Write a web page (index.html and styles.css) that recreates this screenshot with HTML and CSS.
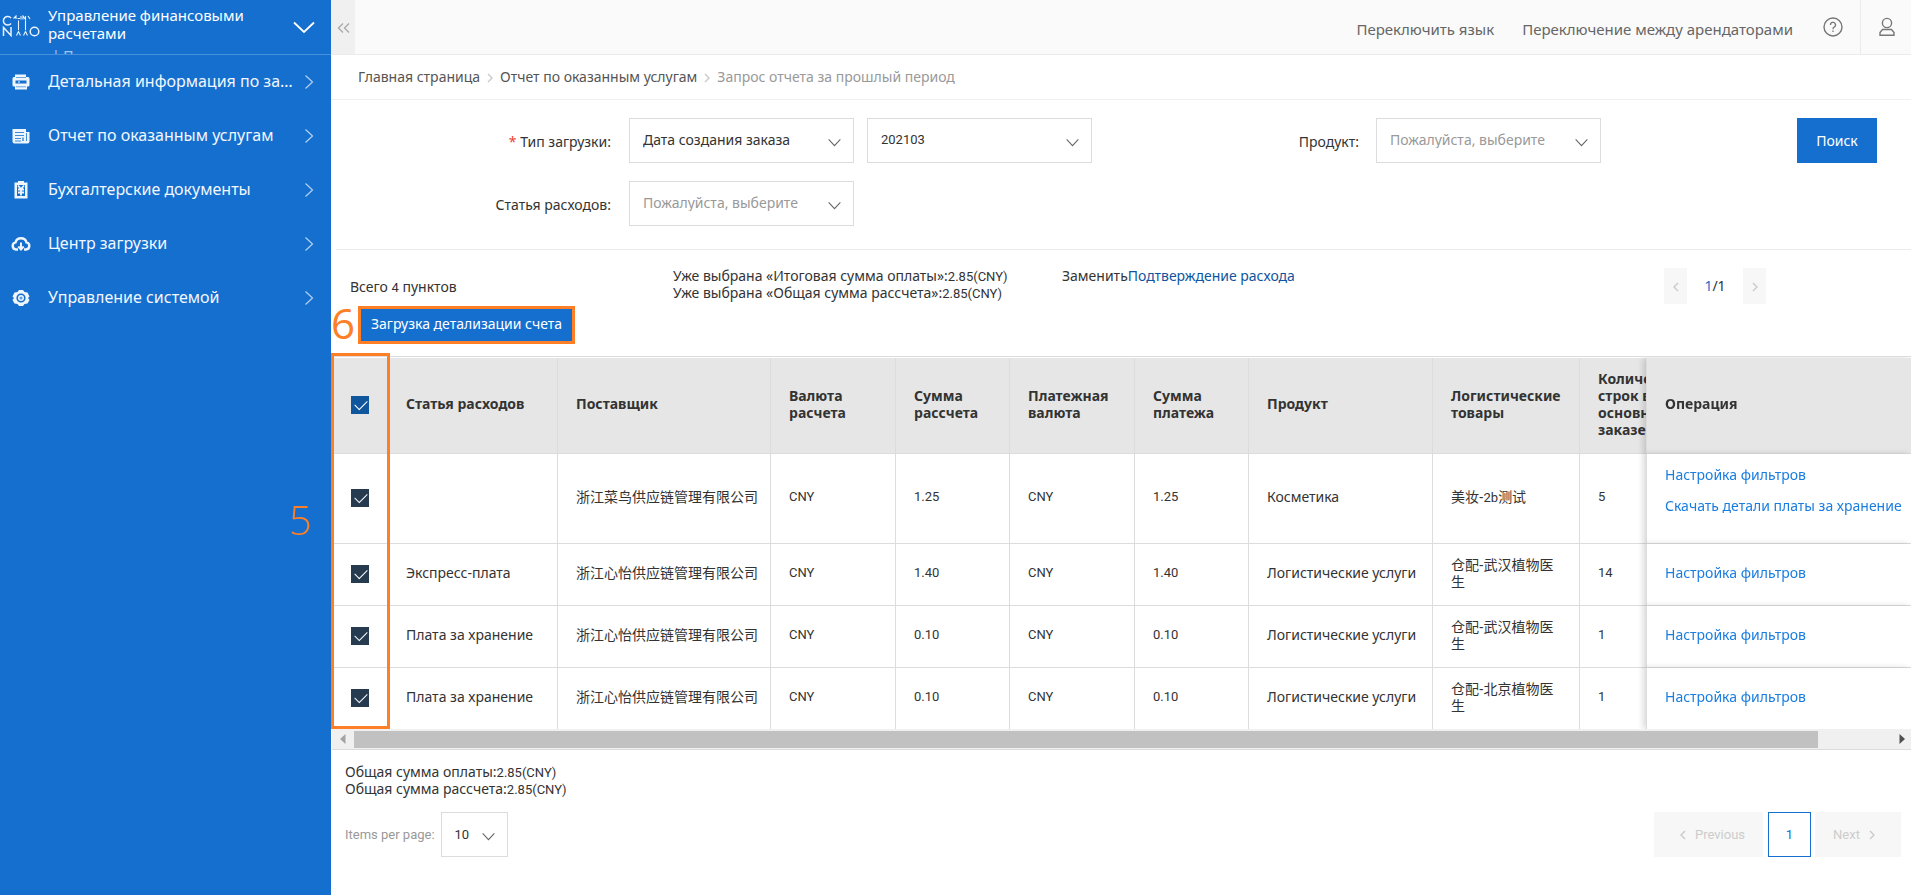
FILE: index.html
```html
<!DOCTYPE html>
<html lang="ru">
<head>
<meta charset="utf-8">
<meta name="viewport" content="width=device-width, initial-scale=1">
<title>Управление финансовыми расчетами</title>
<link rel="stylesheet" href="styles.css">
</head>
<body>
<svg width="0" height="0" class="sprite" aria-hidden="true">
  <symbol id="chev-down" viewBox="0 0 16 10"><path d="M1.500 1.500 8 8.500 14.500 1.500" fill="none" stroke="currentColor" stroke-width="1.200"/></symbol>
  <symbol id="chev-right" viewBox="0 0 10 16"><path d="M1.500 1.500 8.500 8 1.500 14.500" fill="none" stroke="currentColor" stroke-width="1.200"/></symbol>
  <symbol id="small-right" viewBox="0 0 6 10"><path d="M1 1 5 5 1 9" fill="none" stroke="currentColor" stroke-width="1.500"/></symbol>
  <symbol id="small-left" viewBox="0 0 6 10"><path d="M5 1 1 5 5 9" fill="none" stroke="currentColor" stroke-width="1.500"/></symbol>
</svg>
<div class="app">
  <aside class="sidebar">
    <div class="brand">
      <svg class="logo" viewBox="0 0 38 22" role="img" aria-label="CAINIAO"><g fill="none" stroke="#e8f2fc" stroke-width="1.500"><path d="M9 3A4.300 4.300 0 1 0 9 8.500M1.500 21V12.500L9 20.500V12"/><circle cx="32.500" cy="16.500" r="4.300"/></g><g fill="none" stroke="#e8f2fc" stroke-width="1.100"><path d="M16.500 5.500V15M23.500 5.500V15M11.500 3.500 14 1V4M15.500 3.500H18M19 1V4.500M21 4.500V1L23.500 4.500V1M26 1 28 4M14.500 20.500 16.500 16.500 18.500 20.500M21.500 20.500 23.500 16.500 25.500 20.500"/></g></svg>
      <div class="brand-text">
        <div class="brand-title">Управление финансовыми расчетами</div>
        <div class="brand-sub">| П</div>
      </div>
      <svg class="brand-chev" viewBox="0 0 22 13"><path d="M1 1.500 11 11 21 1.500" fill="none" stroke="#fff" stroke-width="1.800"/></svg>
    </div>
    <nav>
      <a class="nav-item" href="#"><svg class="nav-icon" viewBox="0 0 20 20"><path d="M4 2.500H15V5H17A1.500 1.500 0 0 1 18.500 6.500V13A1.500 1.500 0 0 1 17 14.500H16V17.500H4V14.500H3A1.500 1.500 0 0 1 1.500 13V6.500A1.500 1.500 0 0 1 3 5H4Z" fill="#eef5fc"/><path d="M5 5.500H15M5 14.800H15" stroke="#6aa5e0"/><path d="M4.500 8.500H15.500V11.500H4.500Z" fill="#146fcf"/><path d="M7 9.500H9V10.500H7Z" fill="#fff"/></svg><span>Детальная информация по заказам</span><svg class="nav-arrow"><use href="#chev-right"/></svg></a>
      <a class="nav-item" href="#"><svg class="nav-icon" viewBox="0 0 20 20"><path d="M1.500 3H15V6H18.500V15.500A2 2 0 0 1 16.500 17.500H3.500A2 2 0 0 1 1.500 15.500Z" fill="#eef5fc"/><path d="M4 6.500H13M4 9.500H13M4 12.500H10M4 15H10M15.500 7V15" stroke="#3f8bd8"/><path d="M11 11.500H13V15H11Z" fill="#6aa5e0"/></svg><span>Отчет по оказанным услугам</span><svg class="nav-arrow"><use href="#chev-right"/></svg></a>
      <a class="nav-item" href="#"><svg class="nav-icon" viewBox="0 0 20 20"><path d="M3.500 2.500H7V1H13V2.500H16.500V18.500H3.500Z" fill="#eef5fc"/><path d="M6 5H14V16H6Z" fill="#146fcf"/><path d="M7 5.500 10 9 13 5.500M10 8.500V15.500M7 9.500H13M7 12.500H13" fill="none" stroke="#eef5fc" stroke-width="1.800"/></svg><span>Бухгалтерские документы</span><svg class="nav-arrow"><use href="#chev-right"/></svg></a>
      <a class="nav-item" href="#"><svg class="nav-icon" viewBox="0 0 20 20"><path d="M7 15.500H5A3.600 3.600 0 0 1 4.500 8.400 5.700 5.700 0 0 1 15.500 8.400 3.600 3.600 0 0 1 15 15.500H13" fill="none" stroke="#eef5fc" stroke-width="2.400"/><path d="M10 8.500V15M7.300 12.500 10 15.500 12.700 12.500" fill="none" stroke="#eef5fc" stroke-width="2"/></svg><span>Центр загрузки</span><svg class="nav-arrow"><use href="#chev-right"/></svg></a>
      <a class="nav-item" href="#"><svg class="nav-icon" viewBox="0 0 20 20"><path d="M8 2H12L13.500 4 16.500 4.500 18.500 8.500 17 10 18.500 12 16.500 15.500 13.500 16 12 18H8L6.500 16 3.500 15.500 1.500 12 3 10 1.500 8.500 3.500 4.500 6.500 4Z" fill="#eef5fc"/><circle cx="10" cy="10" r="3.800" fill="none" stroke="#146fcf" stroke-width="1.600"/><circle cx="10" cy="10" r="1.500" fill="#5a9cdf"/></svg><span>Управление системой</span><svg class="nav-arrow"><use href="#chev-right"/></svg></a>
    </nav>
  </aside>

  <main class="main">
    <header class="topbar">
      <button class="collapse" type="button" aria-label="Свернуть меню"><svg viewBox="0 0 13 10"><path d="M6 .5 1.500 5 6 9.500M12 .5 7.500 5 12 9.500" fill="none" stroke="#aaa" stroke-width="1.400"/></svg></button>
      <a class="top-link" href="#">Переключить язык</a>
      <a class="top-link" href="#">Переключение между арендаторами</a>
      <button class="icon-btn help" type="button" aria-label="Помощь"><svg viewBox="0 0 20 20"><circle cx="10" cy="10" r="9" fill="none" stroke="#777" stroke-width="1.400"/><path d="M7.500 8A2.500 2.500 0 1 1 11 10.200Q10 10.600 10 12.300M10 13.500V15" fill="none" stroke="#777" stroke-width="1.300"/></svg></button>
      <button class="icon-btn user" type="button" aria-label="Профиль"><svg viewBox="0 0 20 20"><circle cx="10" cy="6" r="4.600" fill="none" stroke="#777" stroke-width="1.400"/><path d="M5.500 12.500H14.500L17 15.500V18.300H3V15.500Z" fill="none" stroke="#777" stroke-width="1.400"/></svg></button>
    </header>

    <nav class="crumbs">
      <a href="#">Главная страница</a><svg><use href="#small-right"/></svg><a href="#">Отчет по оказанным услугам</a><svg><use href="#small-right"/></svg><span>Запрос отчета за прошлый период</span>
    </nav>

    <form class="filters">
      <div class="filter-grid">
        <label for="type"><i>*</i> Тип загрузки:</label>
        <span class="select"><select id="type"><option>Дата создания заказа</option></select><svg><use href="#chev-down"/></svg></span>
        <span class="select"><select class="latin" aria-label="Период"><option>202103</option></select><svg><use href="#chev-down"/></svg></span>
        <label for="cost">Статья расходов:</label>
        <span class="select empty"><select id="cost"><option>Пожалуйста, выберите</option></select><svg><use href="#chev-down"/></svg></span>
      </div>
      <div class="filter-side">
        <label for="product">Продукт:</label>
        <span class="select empty"><select id="product"><option>Пожалуйста, выберите</option></select><svg><use href="#chev-down"/></svg></span>
      </div>
      <button class="search" type="button">Поиск</button>
    </form>

    <section class="toolbar">
      <div class="left">
        <p>Всего <b>4</b> пунктов</p>
        <div class="download-wrap"><span class="step step-six">6</span><button class="download" type="button">Загрузка детализации счета</button></div>
      </div>
      <p class="sums">Уже выбрана «Итоговая сумма оплаты»:<b>2.85(CNY)</b><br>Уже выбрана «Общая сумма рассчета»:<b>2.85(CNY)</b></p>
      <p class="replace">Заменить<a href="#">Подтверждение расхода</a></p>
      <div class="mini-pager"><button type="button" aria-label="Назад"><svg><use href="#small-left"/></svg></button><span><em>1</em>/1</span><button type="button" aria-label="Вперед"><svg><use href="#small-right"/></svg></button></div>
    </section>

    <section class="table-area">
      <div class="table-scroll">
        <table>
          <colgroup><col class="c-check"><col class="c-cost"><col class="c-supplier"><col class="c-currency"><col class="c-sum"><col class="c-currency"><col class="c-sum"><col class="c-product"><col class="c-goods"><col class="c-goods"><col class="c-action"></colgroup>
          <thead><tr>
            <th><input type="checkbox" checked aria-label="Выбрать все"></th><th>Статья расходов</th><th>Поставщик</th><th>Валюта расчета</th><th>Сумма рассчета</th><th>Платежная валюта</th><th>Сумма платежа</th><th>Продукт</th><th>Логистические товары</th><th>Количество строк в основном заказе</th><th class="fixed">Операция</th>
          </tr></thead>
          <tbody>
            <tr class="tall"><td><input type="checkbox" checked aria-label="Строка 1"></td><td></td><td class="line">浙江菜鸟供应链管理有限公司</td><td class="latin">CNY</td><td class="latin">1.25</td><td class="latin">CNY</td><td class="latin">1.25</td><td class="line">Косметика</td><td>美妆-<b>2b</b>测试</td><td class="latin">5</td><td class="fixed"><a href="#">Настройка фильтров</a><a href="#">Скачать детали платы за хранение</a></td></tr>
            <tr><td><input type="checkbox" checked aria-label="Строка 2"></td><td>Экспресс-плата</td><td class="line">浙江心怡供应链管理有限公司</td><td class="latin">CNY</td><td class="latin">1.40</td><td class="latin">CNY</td><td class="latin">1.40</td><td class="line">Логистические услуги</td><td>仓配-武汉植物医生</td><td class="latin">14</td><td class="fixed"><a href="#">Настройка фильтров</a></td></tr>
            <tr><td><input type="checkbox" checked aria-label="Строка 3"></td><td>Плата за хранение</td><td class="line">浙江心怡供应链管理有限公司</td><td class="latin">CNY</td><td class="latin">0.10</td><td class="latin">CNY</td><td class="latin">0.10</td><td class="line">Логистические услуги</td><td>仓配-武汉植物医生</td><td class="latin">1</td><td class="fixed"><a href="#">Настройка фильтров</a></td></tr>
            <tr><td><input type="checkbox" checked aria-label="Строка 4"></td><td>Плата за хранение</td><td class="line">浙江心怡供应链管理有限公司</td><td class="latin">CNY</td><td class="latin">0.10</td><td class="latin">CNY</td><td class="latin">0.10</td><td class="line">Логистические услуги</td><td>仓配-北京植物医生</td><td class="latin">1</td><td class="fixed"><a href="#">Настройка фильтров</a></td></tr>
          </tbody>
        </table>
      </div>
      <div class="highlight"></div>
      <span class="step step-five">5</span>
    </section>
    <div class="scrollbar" aria-hidden="true">
      <svg viewBox="0 0 6 10"><path d="M5.500 0V10L0 5Z" fill="#a3a3a3"/></svg>
      <div class="track"><div class="thumb"></div></div>
      <svg viewBox="0 0 6 10"><path d="M.5 0V10L6 5Z" fill="#505050"/></svg>
    </div>

    <footer class="bottom">
      <p>Общая сумма оплаты:<b>2.85(CNY)</b><br>Общая сумма рассчета:<b>2.85(CNY)</b></p>
      <div class="pager-row">
        <label for="size">Items per page:</label>
        <span class="select size"><select id="size" class="latin"><option>10</option></select><svg><use href="#chev-down"/></svg></span>
        <div class="pager">
          <button class="prev" type="button" disabled><svg><use href="#small-left"/></svg>Previous</button>
          <button class="current" type="button">1</button>
          <button class="next" type="button" disabled>Next<svg><use href="#small-right"/></svg></button>
        </div>
      </div>
    </footer>
  </main>
</div>
</body>
</html>
```
FILE: styles.css
```css
* { box-sizing: border-box; }
body {
  margin: 0;
  font: 14px/17px "Noto Sans", "Noto Sans CJK SC", sans-serif;
  color: #333;
  background: #fff;
}
a { text-decoration: none; color: inherit; }
p { margin: 0; }
b { font-weight: 400; font-family: Roboto, sans-serif; font-size: 13px; line-height: 1; }
button, select { font: inherit; color: inherit; border: 0; margin: 0; }
button { padding: 0; cursor: pointer; }
.sprite { position: absolute; }
.latin { font-family: Roboto, sans-serif; font-size: 13px; }
.app { display: flex; min-height: 100vh; }

/* Sidebar */
.sidebar { flex: 0 0 331px; background: #146fcf; color: #fff; }
.brand {
  display: flex;
  height: 55px;
  padding: 0 16px 0 2px;
  border-bottom: 1px solid #4790dc;
  overflow: hidden;
}
.logo { width: 38px; height: 22px; margin: 15px 8px 0 0; flex: none; }
.brand-text { flex: 1; padding-top: 6px; font-size: 15px; line-height: 18px; }
.brand-title { max-width: 210px; }
.brand-sub { padding: 5px 0 0 4px; font-size: 14px; opacity: .6; }
.brand-chev { width: 22px; height: 13px; margin-top: 21px; flex: none; }
.nav-item {
  display: flex;
  align-items: center;
  height: 54px;
  padding: 0 17px 0 11px;
  font-size: 16px;
  line-height: 22px;
  color: #f2f7fd;
}
.nav-item span { width: 248px; padding-bottom: 2px; overflow: hidden; white-space: nowrap; text-overflow: ellipsis; }
.nav-icon { width: 20px; height: 20px; margin-right: 17px; flex: none; }
.nav-arrow { width: 10px; height: 16px; margin-left: auto; flex: none; color: #b4d2f2; }

/* Header */
.main { flex: 1; min-width: 0; }
.topbar {
  display: flex;
  justify-content: flex-end;
  align-items: center;
  height: 55px;
  background: #fafafa;
  border-bottom: 1px solid #ebebeb;
  font-size: 15px;
  color: #666;
}
.collapse { width: 24px; align-self: stretch; margin-right: auto; background: #f0f0f0; }
.collapse svg { width: 13px; height: 10px; }
.top-link { margin: 4px 0 0 28px; }
.icon-btn { display: flex; background: none; }
.icon-btn svg { width: 20px; height: 20px; }
.help { margin: 0 17px 0 30px; }
.user { align-items: center; align-self: stretch; padding: 0 14px 0 16px; border-left: 1px solid #ebebeb; }
.crumbs {
  display: flex;
  align-items: center;
  height: 45px;
  padding: 0 0 2px 27px;
  border-bottom: 1px solid #f0f0f0;
  color: #555;
}
.crumbs svg { width: 6px; height: 10px; margin: 4px 7px 0 7px; color: #ccc; }
.crumbs span { color: #999; }

/* Filters */
.filters { display: flex; margin-left: 5px; padding: 18px 34px 23px 0; border-bottom: 1px solid #ebebeb; }
.filter-grid { display: grid; grid-template-columns: 275px 225px 225px; gap: 18px 13px; align-items: center; }
.filter-grid label { text-align: right; }
.filter-grid .select { margin-left: 5px; margin-right: -5px; }
.filters label { padding-top: 2px; }
.filter-grid i { color: #f04134; font-style: normal; }
.filter-side { display: flex; align-items: center; align-self: flex-start; gap: 17px; margin-left: auto; }
.select { position: relative; display: block; width: 225px; }
.select select {
  appearance: none;
  display: block;
  width: 100%;
  height: 45px;
  padding: 0 40px 2px 13px;
  border: 1px solid #dcdcdc;
  background: #fff;
}
.select svg { position: absolute; right: 12px; top: 20px; width: 15px; height: 9px; color: #666; pointer-events: none; }
.empty select { color: #999; }
.search { width: 80px; height: 45px; margin-left: 196px; background: #146fcf; color: #fff; }

/* Toolbar */
.toolbar { display: flex; padding: 17px 145px 0 19px; height: 106px; }
.left { width: 323px; padding-top: 11px; }
.download-wrap { position: relative; margin: 11px 0 0 8px; }
.download { height: 38px; padding: 0 10px 3px; border: 3px solid #ff7f27; background: #146fcf; color: #fff; }
.step { position: absolute; color: #ff7f27; font-family: "Open Sans", sans-serif; font-weight: 300; font-size: 40px; line-height: 48px; }
.step-six { left: -27px; top: -7px; font-size: 42px; font-weight: 400; }
.sums { width: 389px; }
.replace a { color: #0f55a0; }
.mini-pager { display: flex; margin-left: auto; padding-top: 1px; }
.mini-pager button { width: 23px; height: 36px; background: #f7f7f7; color: #ccc; }
.mini-pager svg { width: 6px; height: 10px; }
.mini-pager span { width: 56px; text-align: center; line-height: 35px; }
.mini-pager em { color: #146fcf; font-style: normal; }

/* Table */
.table-area { position: relative; }
.table-scroll { overflow: hidden; margin-left: 1px; padding-top: 1px; border-top: 1px solid #dcdcdc; }
table { table-layout: fixed; width: 1660px; border-spacing: 0; }
.c-check { width: 56px; }
.c-cost { width: 170px; }
.c-supplier { width: 213px; }
.c-currency { width: 125px; }
.c-sum { width: 114px; }
.c-product { width: 184px; }
.c-goods { width: 147px; }
.c-action { width: 265px; }
th, td { padding: 0 18px 4px; text-align: left; border-right: 1px solid #dcdcdc; border-bottom: 1px solid #dcdcdc; }
th { height: 96px; background: #e6e6e6; font-weight: 700; }
td { height: 62px; background: #fff; }
.line { white-space: nowrap; }
tbody tr:last-child td { height: 61px; border-bottom: 0; }
tbody .tall td { height: 90px; }
th:first-child, td:first-child { padding-left: 19px; border-right-color: transparent; }
.fixed { position: sticky; right: 0; border-left: 1px solid #dcdcdc; border-right: 0; box-shadow: -3px 0 6px rgba(0, 0, 0, .15); }
.fixed a { display: block; color: #1a7de0; white-space: nowrap; }
.fixed a + a { margin-top: 14px; }
.tall .fixed { padding-bottom: 18px; }
input[type="checkbox"] { appearance: none; display: block; width: 18px; height: 18px; margin: 3px 0 0; background: #263a50; }
thead input[type="checkbox"] { background: #0f569c; }
input[type="checkbox"]:checked::after {
  content: "";
  float: left;
  width: 11px;
  height: 6px;
  margin: 4px 0 0 4px;
  border: solid #fff;
  border-width: 0 0 1px 1px;
  transform: rotate(-45deg);
}
.highlight { position: absolute; left: 0; top: -3px; bottom: 0; width: 59px; border: 3px solid #ff7f27; pointer-events: none; }
.step-five { left: -42px; top: 140px; }
.scrollbar {
  display: flex;
  align-items: center;
  height: 21px;
  margin-left: 1px;
  padding: 0 6px 0 8px;
  background: #f0f0f0;
  border-bottom: 1px solid #dcdcdc;
}
.scrollbar svg { width: 6px; height: 10px; }
.track { flex: 1; padding: 0 4px 0 8px; }
.thumb { width: 95%; height: 17px; background: #c1c1c1; }

/* Footer */
.bottom { padding: 13px 10px 0 14px; }
.pager-row { display: flex; align-items: center; margin-top: 15px; font-family: Roboto, sans-serif; font-size: 13px; }
.pager-row label { color: #999; margin-right: 6px; }
.select.size { width: 67px; }
.size select { padding-right: 20px; padding-bottom: 0; }
.pager { display: flex; margin-left: auto; color: #ccc; }
.pager button { display: flex; align-items: center; justify-content: center; gap: 9px; height: 45px; background: #f7f7f7; color: #ccc; }
.pager svg { width: 6px; height: 10px; }
.pager .prev { width: 109px; padding-left: 8px; }
.pager .current { width: 43px; margin: 0 4px 0 5px; border: 1px solid #146fcf; background: #fff; color: #146fcf; }
.pager .next { width: 86px; padding-right: 8px; }
```
